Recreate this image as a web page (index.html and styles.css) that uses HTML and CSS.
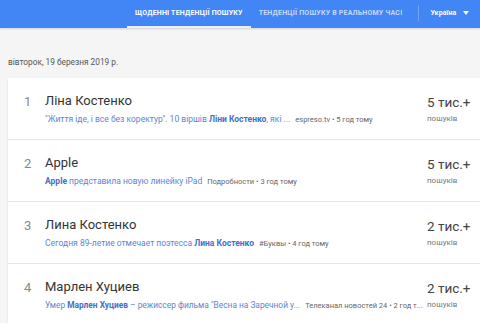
FILE: index.html
```html
<!DOCTYPE html>
<html lang="uk">
<head>
<meta charset="utf-8">
<link rel="stylesheet" href="styles.css">
</head>
<body>
<header class="topbar">
  <nav class="tabs">
    <a class="tab active">ЩОДЕННІ ТЕНДЕНЦІЇ ПОШУКУ</a>
    <a class="tab">ТЕНДЕНЦІЇ ПОШУКУ В РЕАЛЬНОМУ ЧАСІ</a>
  </nav>
  <span class="divider"></span>
  <div class="geo">Україна <svg class="caret" width="6" height="4" viewBox="0 0 6 4"><path d="M0 0h6L3 4z" fill="#fff"/></svg></div>
</header>
<main class="content">
  <div class="date">вівторок, 19 березня 2019 р.</div>
  <section class="card">
    <div class="row">
      <div class="num">1</div>
      <div class="details">
        <div class="title">Ліна Костенко</div>
        <div class="snippet"><span class="link">"Життя іде, і все без коректур". 10 віршів <b>Ліни Костенко</b>, які ...</span><span class="source">espreso.tv • 5 год тому</span></div>
      </div>
      <div class="count"><div class="value">5 тис.+</div><div class="label">пошуків</div></div>
    </div>
    <div class="row">
      <div class="num">2</div>
      <div class="details">
        <div class="title">Apple</div>
        <div class="snippet"><span class="link"><b>Apple</b> представила новую линейку iPad</span><span class="source">Подробности • 3 год тому</span></div>
      </div>
      <div class="count"><div class="value">5 тис.+</div><div class="label">пошуків</div></div>
    </div>
    <div class="row">
      <div class="num">3</div>
      <div class="details">
        <div class="title">Лина Костенко</div>
        <div class="snippet"><span class="link">Сегодня 89-летие отмечает поэтесса <b>Лина Костенко</b></span><span class="source">#Буквы • 4 год тому</span></div>
      </div>
      <div class="count"><div class="value">2 тис.+</div><div class="label">пошуків</div></div>
    </div>
    <div class="row">
      <div class="num">4</div>
      <div class="details">
        <div class="title">Марлен Хуциев</div>
        <div class="snippet"><span class="link tight">Умер <b>Марлен Хуциев</b> – режиссер фильма "Весна на Заречной у...</span><span class="source">Телеканал новостей 24 • 2 год т...</span></div>
      </div>
      <div class="count"><div class="value">2 тис.+</div><div class="label">пошуків</div></div>
    </div>
  </section>
</main>
</body>
</html>
```

FILE: styles.css
```css
html, body {
  margin: 0;
  padding: 0;
}
body {
  width: 480px;
  height: 323px;
  overflow: hidden;
  background: #f5f5f5;
  font-family: Roboto, "Noto Sans", Arial, sans-serif;
  color: #333;
}
.topbar {
  height: 28px;
  background: #4285f4;
  display: flex;
  align-items: stretch;
  padding-left: 127px;
  box-shadow: 0 1px 2px rgba(0,0,0,0.15);
  position: relative;
}
.tabs {
  display: flex;
}
.tab {
  display: flex;
  align-items: center;
  padding: 0 8px;
  font-size: 7px;
  font-weight: 700;
  color: rgba(255,255,255,0.7);
  letter-spacing: 0.2px;
  border-bottom: 2px solid transparent;
  box-sizing: border-box;
}
.tab.active {
  color: #fff;
  border-bottom-color: #e8f0fe;
}
.divider {
  width: 1px;
  height: 16px;
  align-self: center;
  margin: 0 0 2px 8px;
  background: rgba(255,255,255,0.25);
}
.geo {
  display: flex;
  align-items: center;
  gap: 7px;
  padding: 0 0 2px 11px;
  font-size: 7px;
  font-weight: 700;
  letter-spacing: 0.1px;
  color: #fff;
}
.caret { display: block; }
.content {
  padding: 0 0 0 8px;
}
.date {
  margin-top: 28px;
  font-size: 8.3px;
  line-height: 12px;
  color: #555;
}
.card {
  margin-top: 10px;
  width: 500px;
  background: #fff;
  box-shadow: 0 1px 2px rgba(0,0,0,0.12);
}
.row {
  height: 62px;
  box-sizing: border-box;
  display: flex;
  border-bottom: 1px solid #e6e6e6;
}
.num {
  width: 21px;
  padding: 16px 0 0 16px;
  font-size: 13px;
  line-height: 16px;
  color: #888;
}
.details {
  width: 376px;
  padding-top: 15px;
  min-width: 0;
}
.title {
  font-size: 13px;
  line-height: 16px;
  color: #333;
}
.snippet {
  display: flex;
  margin-top: 4px;
  font-size: 8.5px;
  line-height: 12px;
  white-space: nowrap;
  align-items: baseline;
}
.link {
  color: #5b86d6;
  flex: none;
}
.link.tight {
  font-size: 8.35px;
}
.link b {
  color: #3f6fc9;
  font-weight: 700;
}
.source {
  margin-left: 5px;
  font-size: 7.5px;
  color: #666;
}
.count {
  margin-left: 6px;
  padding-top: 16px;
}
.value {
  font-size: 13.5px;
  line-height: 16px;
  color: #444;
}
.label {
  margin-top: 3px;
  font-size: 8px;
  line-height: 12px;
  color: #777;
}
```
